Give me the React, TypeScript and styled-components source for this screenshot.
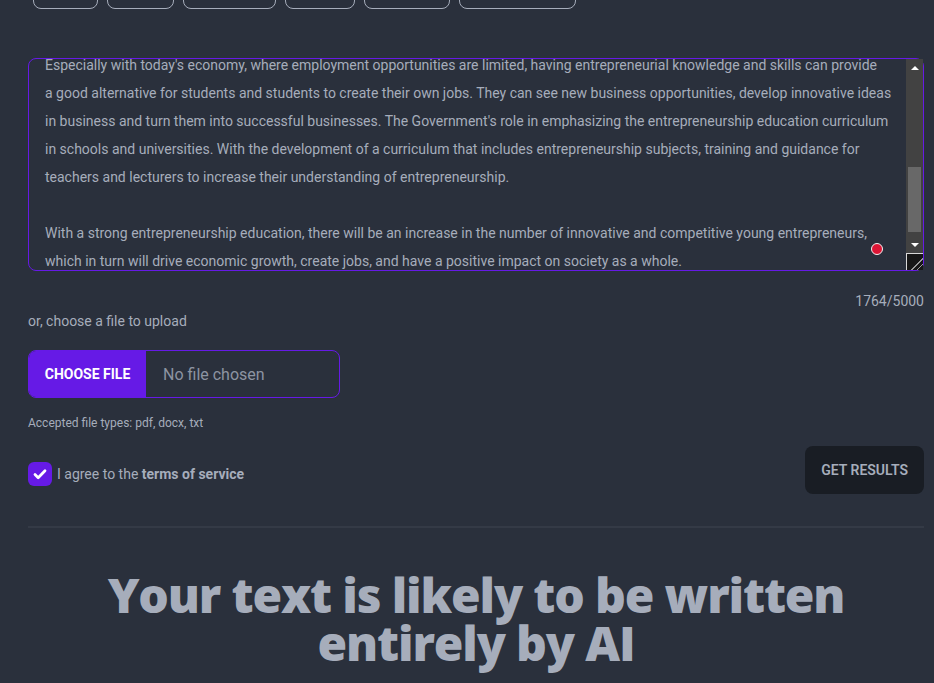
import { useEffect, useRef, useState } from "react";
import styled, { createGlobalStyle } from "styled-components";

const GlobalStyle = createGlobalStyle`
  body {
    margin: 0;
    background-color: #2a303c;
    color: #a6adbb;
    font-family: Roboto, "Liberation Sans", sans-serif;
    overflow: hidden;
  }
`;

const Page = styled.div`
  padding: 0 10px 40px 28px;
`;

const TabRow = styled.div`
  display: flex;
  gap: 9px;
  padding-left: 5px;
  margin-top: -39px;
`;

const TabButton = styled.button<{ $w: number }>`
  width: ${(p) => p.$w}px;
  height: 48px;
  border: 1px solid #a6adbb;
  border-radius: 8px;
  background: transparent;
  color: #a6adbb;
  font: 600 14px Roboto, sans-serif;
  text-transform: uppercase;
`;

const EditorWrap = styled.div`
  position: relative;
  margin-top: 49px;
`;

const Editor = styled.textarea`
  display: block;
  box-sizing: border-box;
  width: 100%;
  height: 213px;
  padding: 8px 34px 8px 16px;
  border: 1px solid #661ae6;
  border-radius: 8px;
  background: #2a303c;
  color: #a6adbb;
  font: 14px/28px Roboto, "Liberation Sans", sans-serif;
  outline: none;
  resize: none;
  white-space: pre;
  overflow: hidden;
`;

const ScrollBar = styled.div`
  position: absolute;
  top: 1px;
  right: 1px;
  bottom: 1px;
  width: 17px;
  display: flex;
  flex-direction: column;
  background: #424242;
`;

const ArrowButton = styled.div<{ $down?: boolean }>`
  display: flex;
  align-items: center;
  justify-content: center;
  height: 17px;
  flex: none;

  &::before {
    content: "";
    border-left: 4px solid transparent;
    border-right: 4px solid transparent;
    ${(p) =>
      p.$down ? "border-top: 4px solid #ffffff;" : "border-bottom: 4px solid #ffffff;"}
  }
`;

const Track = styled.div`
  position: relative;
  flex: 1;
`;

const Thumb = styled.div`
  position: absolute;
  left: 2px;
  right: 2px;
  background: #686868;
`;

const Resizer = styled.div`
  flex: none;
  box-sizing: border-box;
  height: 17px;
  border-top: 1px solid #d8d8d8;
  border-left: 1px solid #d8d8d8;
  background: linear-gradient(
    135deg,
    #171717 0 62%,
    #9a9a9a 62% 66%,
    #171717 66% 80%,
    #9a9a9a 80% 84%,
    #171717 84%
  );
`;

const StatusDot = styled.span`
  position: absolute;
  right: 41px;
  bottom: 16px;
  width: 10px;
  height: 10px;
  border-radius: 50%;
  background: #dc1535;
  border: 1px solid #f3f3f3;
`;

const Counter = styled.div`
  margin-top: 20px;
  text-align: right;
  font-size: 14px;
  line-height: 20px;
`;

const Hint = styled.div`
  font-size: 14px;
  line-height: 20px;
`;

const FileBox = styled.label`
  display: flex;
  align-items: center;
  box-sizing: border-box;
  width: 312px;
  height: 48px;
  margin-top: 19px;
  border: 1px solid #661ae6;
  border-radius: 8px;
  overflow: hidden;
  cursor: pointer;

  input {
    display: none;
  }
`;

const FileButton = styled.span`
  display: flex;
  align-items: center;
  justify-content: center;
  width: 117px;
  height: 100%;
  background: #661ae6;
  color: #ffffff;
  font-size: 14px;
  font-weight: 700;
  text-transform: uppercase;
`;

const FileName = styled.span`
  margin-left: 17px;
  font-size: 16px;
  color: #8d94a2;
`;

const SmallNote = styled.div`
  margin-top: 17px;
  font-size: 12px;
  line-height: 16px;
`;

const ActionRow = styled.div`
  display: flex;
  justify-content: space-between;
  align-items: flex-start;
  margin-top: 15px;
`;

const Agree = styled.label`
  display: flex;
  align-items: center;
  gap: 5px;
  margin-top: 16px;
  font-size: 14px;
  line-height: 24px;

  b {
    font-weight: 700;
  }
`;

const CheckBox = styled.span`
  display: flex;
  align-items: center;
  justify-content: center;
  width: 24px;
  height: 24px;
  border-radius: 6px;
  background: #661ae6;
`;

const ResultsButton = styled.button`
  height: 48px;
  padding: 0 16px;
  border: none;
  border-radius: 8px;
  background: #191d24;
  color: #a6adbb;
  font: 600 14px Roboto, "Liberation Sans", sans-serif;
  text-transform: uppercase;
`;

const Divider = styled.hr`
  margin: 32px 0 0;
  border: none;
  height: 2px;
  background: #343a46;
`;

const Verdict = styled.h1`
  margin: 43px 0 0;
  text-align: center;
  font: 800 48px/48px "Open Sans", "Liberation Sans", sans-serif;
  letter-spacing: -1.15px;
  color: #a6adbb;
`;

const tabs = [
  { label: "Essay", w: 65 },
  { label: "Email", w: 67 },
  { label: "Research", w: 93 },
  { label: "Blog", w: 70 },
  { label: "Review", w: 86 },
  { label: "Social post", w: 117 },
];

const essay = [
  "Entrepreneurship education plays an important role in building the character and mindset of the younger generation. By teaching",
  "students how to identify opportunities, manage risks and work with limited resources, schools can prepare them to face an",
  "uncertain future with confidence and creativity.",
  "",
  "Many graduates still depend on formal employment after finishing their studies. This creates pressure on the labour market,",
  "because the number of available positions does not grow as fast as the number of job seekers. Entrepreneurship education",
  "encourages young people to think independently, to be brave in trying new things and to learn from failure rather than",
  "avoid it. These values are needed not only by business owners, but also by professionals in every field of work, since",
  "initiative and problem solving are valued everywhere.",
  "",
  "Especially with today's economy, where employment opportunities are limited, having entrepreneurial knowledge and skills can provide",
  "a good alternative for students and students to create their own jobs. They can see new business opportunities, develop innovative ideas",
  "in business and turn them into successful businesses. The Government's role in emphasizing the entrepreneurship education curriculum",
  "in schools and universities. With the development of a curriculum that includes entrepreneurship subjects, training and guidance for",
  "teachers and lecturers to increase their understanding of entrepreneurship.",
  "",
  "With a strong entrepreneurship education, there will be an increase in the number of innovative and competitive young entrepreneurs,",
  "which in turn will drive economic growth, create jobs, and have a positive impact on society as a whole.",
].join("\n");

const TRACK_HEIGHT = 211 - 17 * 3;

function App() {
  const editorRef = useRef<HTMLTextAreaElement>(null);
  const [thumb, setThumb] = useState({ top: 92, height: 65 });

  useEffect(() => {
    const el = editorRef.current;
    if (!el) return;
    el.scrollTop = el.scrollHeight - el.clientHeight - 13;
    setThumb({
      top: Math.round((el.scrollTop / el.scrollHeight) * TRACK_HEIGHT),
      height: Math.round((el.clientHeight / el.scrollHeight) * TRACK_HEIGHT),
    });
  }, []);

  return (
    <Page>
      <GlobalStyle />
      <TabRow>
        {tabs.map((t) => (
          <TabButton key={t.label} $w={t.w}>
            {t.label}
          </TabButton>
        ))}
      </TabRow>

      <EditorWrap>
        <Editor ref={editorRef} defaultValue={essay} spellCheck={false} />
        <ScrollBar>
          <ArrowButton />
          <Track>
            <Thumb style={{ top: thumb.top, height: thumb.height }} />
          </Track>
          <ArrowButton $down />
          <Resizer />
        </ScrollBar>
        <StatusDot />
      </EditorWrap>

      <Counter>1764/5000</Counter>
      <Hint>or, choose a file to upload</Hint>

      <FileBox>
        <input type="file" accept=".pdf,.docx,.txt" />
        <FileButton>Choose File</FileButton>
        <FileName>No file chosen</FileName>
      </FileBox>
      <SmallNote>Accepted file types: pdf, docx, txt</SmallNote>

      <ActionRow>
        <Agree>
          <CheckBox>
            <svg width="16" height="16" viewBox="0 0 16 16">
              <path
                d="M3 8.5l3.2 3.2L13 4.8"
                fill="none"
                stroke="#ffffff"
                strokeWidth="2.8"
                strokeLinecap="round"
                strokeLinejoin="round"
              />
            </svg>
          </CheckBox>
          <span>
            I agree to the <b>terms of service</b>
          </span>
        </Agree>
        <ResultsButton>Get Results</ResultsButton>
      </ActionRow>

      <Divider />

      <Verdict>
        Your text is likely to be written
        <br />
        entirely by AI
      </Verdict>
    </Page>
  );
}

export default App;
